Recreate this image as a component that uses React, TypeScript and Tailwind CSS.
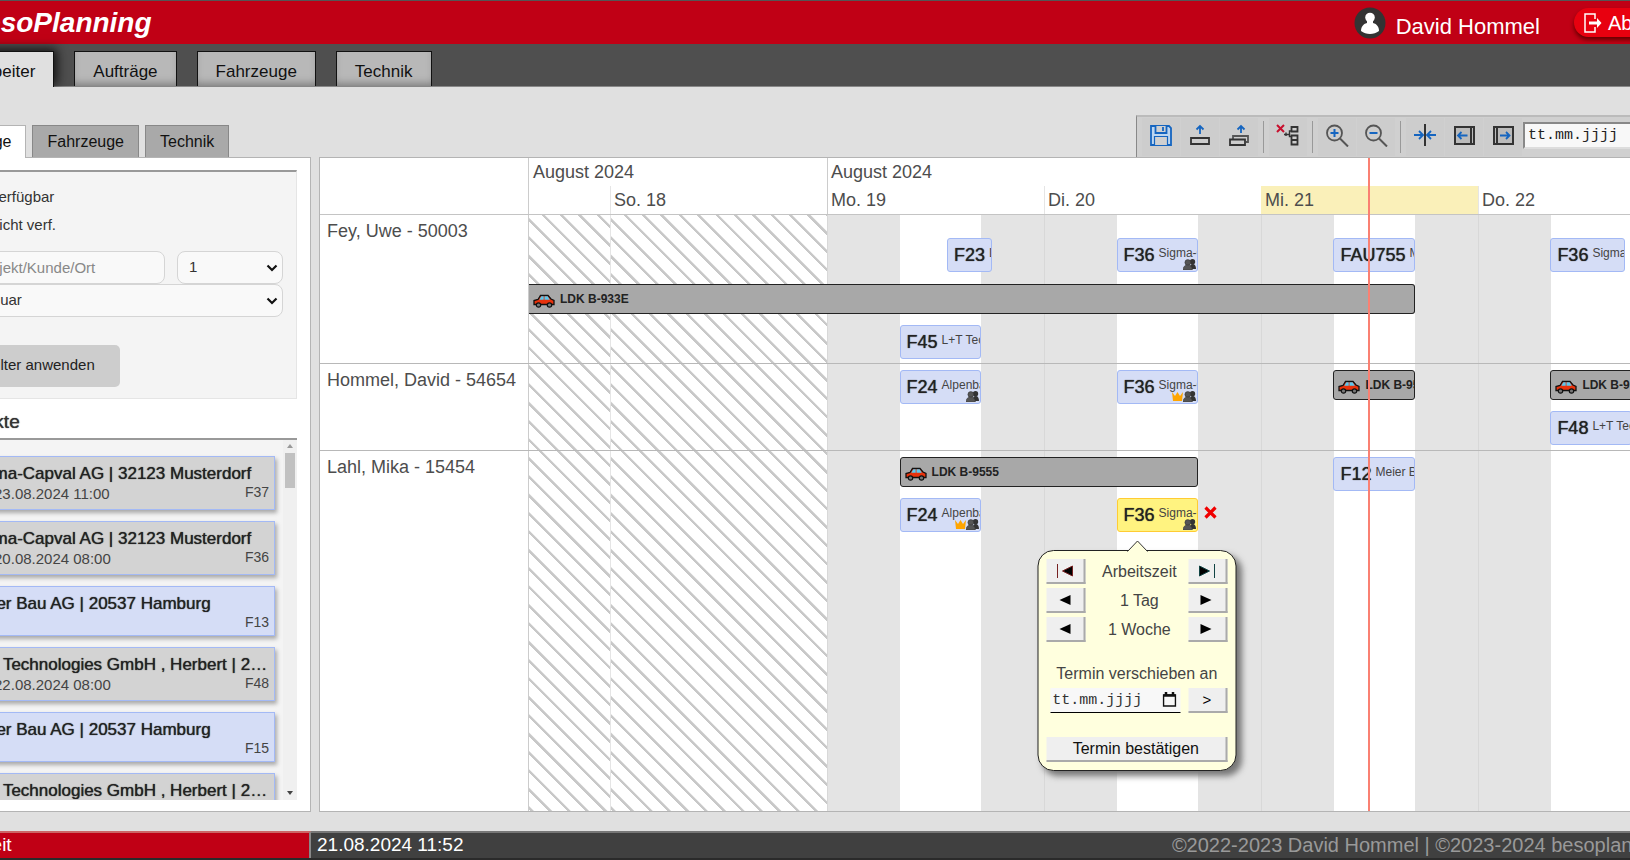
import { useState } from "react";
import type { ReactNode } from "react";

// visible range: Saturday 15:00 until Thursday 24:00
const RANGE_HOURS = 129;
const MO = 33;
const DI = 57;
const MI = 81;
const DO = 105;

const pct = (hours: number) => `${(hours / RANGE_HOURS) * 100}%`;

interface IEntry {
    kind: "order" | "car";
    label: string;
    customer?: string;
    from: number;
    to: number;
    top: string;
    team?: boolean;
    lead?: boolean;
    selected?: boolean;
}

interface IEmployee {
    name: string;
    height: string;
    entries: IEntry[];
}

const employees: IEmployee[] = [
    {
        name: "Fey, Uwe - 50003",
        height: "h-[149px]",
        entries: [
            { kind: "order", label: "F23", customer: "L+T Technologies", from: MO + 13.25, to: MO + 18.25, top: "top-[23px]" },
            { kind: "order", label: "F36", customer: "Sigma-Capval AG", from: DI + 8, to: DI + 17, top: "top-[23px]", team: true },
            { kind: "order", label: "FAU755", customer: "Meier Bau AG", from: MI + 8, to: MI + 17, top: "top-[23px]" },
            { kind: "order", label: "F36", customer: "Sigma-Capval AG", from: DO + 8, to: DO + 16.25, top: "top-[23px]" },
            { kind: "car", label: "LDK B-933E", from: 0, to: MI + 17, top: "top-[69px]" },
            { kind: "order", label: "F45", customer: "L+T Technologies", from: MO + 8, to: MO + 17, top: "top-[110px]" },
        ],
    },
    {
        name: "Hommel, David - 54654",
        height: "h-[87px]",
        entries: [
            { kind: "order", label: "F24", customer: "Alpenbau", from: MO + 8, to: MO + 17, top: "top-[6px]", team: true },
            { kind: "order", label: "F36", customer: "Sigma-Capval AG", from: DI + 8, to: DI + 17, top: "top-[6px]", team: true, lead: true },
            { kind: "car", label: "LDK B-9555", from: MI + 8, to: MI + 17, top: "top-[6px]" },
            { kind: "car", label: "LDK B-9555", from: DO + 8, to: DO + 24, top: "top-[6px]" },
            { kind: "order", label: "F48", customer: "L+T Technologies", from: DO + 8, to: DO + 17, top: "top-[47px]" },
        ],
    },
    {
        name: "Lahl, Mika - 15454",
        height: "flex-1",
        entries: [
            { kind: "car", label: "LDK B-9555", from: MO + 8, to: DI + 17, top: "top-[6px]" },
            { kind: "order", label: "F12", customer: "Meier Bau AG", from: MI + 8, to: MI + 17, top: "top-[6px]" },
            { kind: "order", label: "F24", customer: "Alpenbau", from: MO + 8, to: MO + 17, top: "top-[47px]", team: true, lead: true },
            { kind: "order", label: "F36", customer: "Sigma-Capval AG", from: DI + 8, to: DI + 17, top: "top-[47px]", team: true, selected: true },
        ],
    },
];

const projects = [
    { title: "Sigma-Capval AG | 32123 Musterdorf", date: "23.08.2024 11:00", no: "F37" },
    { title: "Sigma-Capval AG | 32123 Musterdorf", date: "20.08.2024 08:00", no: "F36" },
    { title: "Meier Bau AG | 20537 Hamburg", no: "F13" },
    { title: "L+T Technologies GmbH , Herbert | 20537 Hamburg", date: "22.08.2024 08:00", no: "F48" },
    { title: "Meier Bau AG | 20537 Hamburg", no: "F15" },
    { title: "L+T Technologies GmbH , Herbert | 20537 Hamburg", date: "22.08.2024 08:00", no: "F49" },
];

function CarIcon() {
    return (
        <svg width="22" height="14" viewBox="0 0 22 14" className="mt-1 shrink-0">
            <path d="M1 10.500V6.500L5 5.500L7.500 1.500H15L18 5L21 6.500V10.500Z" fill="#e8320c" stroke="#111" strokeWidth="1.300" />
            <path d="M6.300 5.800L8.300 2.300H10.700V5.800Z" fill="#5cc8ee" />
            <path d="M11.500 5.800V2.300H14.600L16.900 5.800Z" fill="#5cc8ee" />
            <circle cx="5.500" cy="11" r="2.200" fill="#777" stroke="#111" strokeWidth="1.200" />
            <circle cx="16.500" cy="11" r="2.200" fill="#777" stroke="#111" strokeWidth="1.200" />
        </svg>
    );
}

function TeamIcon() {
    return (
        <svg width="13" height="11" viewBox="0 0 13 11">
            <circle cx="9.500" cy="2.700" r="2.700" fill="#333" />
            <path d="M6.500 10C6.500 7 7.500 5 9.700 5S13 7 13 10Z" fill="#333" />
            <circle cx="4.800" cy="3.500" r="2.900" fill="#555" stroke="#333" strokeWidth=".5" />
            <path d="M0 11C0 8 1.500 6 4.700 6S9.400 8 9.400 11Z" fill="#555" stroke="#333" strokeWidth=".5" />
        </svg>
    );
}

function CrownIcon() {
    return (
        <svg width="11" height="10" viewBox="0 0 11 10">
            <path d="M0 0L3 4L5.500 0L8 4L11 0L10 9H1Z" fill="#ffa500" />
        </svg>
    );
}

function Chevron() {
    return (
        <svg width="12" height="8" viewBox="0 0 12 8" className="pointer-events-none absolute top-[13px] right-[5px]">
            <path d="M1.500 1.500L6 6L10.500 1.500" fill="none" stroke="#111" strokeWidth="2.200" />
        </svg>
    );
}

function ToolButton({ label, children }: { label: string; children: ReactNode }) {
    return (
        <button aria-label={label} title={label} className="flex h-[38px] w-[38px] items-center justify-center bg-[#cdcdcd] pb-1 hover:bg-[#bdbdbd]">
            <svg width="24" height="24" viewBox="0 0 24 24" fill="none" stroke="#333" strokeWidth="1.800">
                {children}
            </svg>
        </button>
    );
}

function Separator() {
    return <div className="mx-1 h-8 w-px bg-[#999]" />;
}

function Toolbar() {
    return (
        <div className="ml-auto flex h-[42px] w-[560px] items-center gap-px border-t-2 border-l border-t-[#bbb] border-l-[#888] bg-[#d0d0d0] pl-[5px]">
            <ToolButton label="Speichern">
                <g stroke="#1565c0">
                    <path d="M2 3H20L22 5V22H2Z" fill="#bcd6f0" />
                    <path d="M6.500 3V10H17.500V3M14 4V8" fill="#d0d0d0" />
                    <path d="M5.500 22V13.500H18.500V22" fill="#d0d0d0" strokeWidth="1.200" />
                </g>
            </ToolButton>
            <ToolButton label="Einlagern">
                <path d="M12 11V3M8.500 6.500L12 3L15.500 6.500" stroke="#1565c0" />
                <path d="M3 15H21V21H3Z" />
            </ToolButton>
            <ToolButton label="Alle einlagern">
                <path d="M14 10V3M10.500 6.500L14 3L17.500 6.500" stroke="#1565c0" />
                <path d="M6 16V13H21V19H19" stroke="#555" />
                <path d="M3 16.500H18V22H3Z" />
            </ToolButton>
            <Separator />
            <ToolButton label="Gruppe entfernen">
                <path d="M1 2L8 9M8 2L1 9" stroke="#c8102e" strokeWidth="2" />
                <path d="M15.500 4H21.500V8.500H15.500ZM15.500 12.500H21.500V17H15.500ZM15.500 17H21.500V21.500H15.500Z" />
                <path d="M8 11.500H13.500V8H15.500M13.500 9V13.500H15.500M10 9.500V13" strokeWidth="1.400" />
            </ToolButton>
            <Separator />
            <ToolButton label="Vergrößern">
                <circle cx="9.500" cy="10" r="7.500" stroke="#555" />
                <path d="M15 15.500L23 23.500" stroke="#555" strokeWidth="2" />
                <path d="M9.500 6V14M5.500 10H13.500" stroke="#1565c0" strokeWidth="2" />
            </ToolButton>
            <ToolButton label="Verkleinern">
                <circle cx="9.500" cy="10" r="7.500" stroke="#555" />
                <path d="M15 15.500L23 23.500" stroke="#555" strokeWidth="2" />
                <path d="M5.500 10H13.500" stroke="#1565c0" strokeWidth="2" />
            </ToolButton>
            <Separator />
            <ToolButton label="Heute">
                <path d="M12 1V23" strokeWidth="2" />
                <path d="M1 12H9.500M6 8L10 12L6 16M23 12H14.500M18 8L14 12L18 16" stroke="#1565c0" strokeWidth="1.800" />
            </ToolButton>
            <ToolButton label="Zurück">
                <path d="M3 4H22V21H3ZM19 4V21" strokeWidth="2" fill="#bbb" />
                <path d="M15.500 12.500H6M9.500 9L6 12.500L9.500 16" stroke="#1565c0" />
            </ToolButton>
            <ToolButton label="Vor">
                <path d="M3 4H22V21H3ZM6 4V21" strokeWidth="2" fill="#bbb" />
                <path d="M9 12.500H18.500M15 9L18.500 12.500L15 16" stroke="#1565c0" />
            </ToolButton>
            <input
                aria-label="Datum wählen"
                placeholder="tt.mm.jjjj"
                className="-mt-1 h-[27px] min-w-0 flex-1 border-2 border-[#888] border-r-[#ddd] border-b-[#ddd] bg-[#f8f8f8] px-[3px] font-['Liberation_Mono',monospace] text-[15px] placeholder:text-[#222]"
            />
        </div>
    );
}

function Entry({ entry }: { entry: IEntry }) {
    const place = { left: pct(entry.from), width: pct(entry.to - entry.from) };
    if (entry.kind === "car") {
        return (
            <div
                style={place}
                className={`absolute flex h-[30px] items-center gap-[5px] overflow-hidden rounded-[3px] border border-[#222] bg-[#a8a8a8] pl-1 text-[12px] font-bold whitespace-nowrap text-[#222] ${entry.from === 0 ? "rounded-l-none border-l-0" : ""} ${entry.top}`}
            >
                <CarIcon />
                <span>{entry.label}</span>
            </div>
        );
    }
    return (
        <div
            style={place}
            className={`absolute flex h-[34px] overflow-hidden rounded-[3px] border pl-[6px] whitespace-nowrap ${entry.top} ${entry.selected ? "border-[#fc3] bg-[#fff380]" : "border-[#a3b9f5] bg-[#d5ddf6]"}`}
        >
            <span className="text-[18px] leading-[33px] text-[#222] [text-shadow:0_0_1px_#222]">{entry.label}</span>
            <span className="ml-1 text-[12px] leading-7 text-[#444]">{entry.customer}</span>
            <span className="absolute right-px bottom-px flex items-end">
                {entry.lead && <CrownIcon />}
                {entry.team && <TeamIcon />}
            </span>
        </div>
    );
}

const popupButton = "h-[25px] w-[39px] border-r-2 border-b-2 border-[#aaa] bg-[#efefef] text-[15px] leading-none text-black";

function StepRow({ label, back, forward }: { label: string; back: ReactNode; forward: ReactNode }) {
    return (
        <div className="flex items-center justify-between">
            <button aria-label={`${label} zurück`} className={popupButton}>
                <svg width="20" height="16" viewBox="0 0 20 16" className="mx-auto">{back}</svg>
            </button>
            <span className="pl-[5px]">{label}</span>
            <button aria-label={`${label} vor`} className={popupButton}>
                <svg width="20" height="16" viewBox="0 0 20 16" className="mx-auto">{forward}</svg>
            </button>
        </div>
    );
}

function MovePopup() {
    return (
        <div
            style={{ left: pct(DI + 10.25) }}
            className="absolute top-[99px] z-20 flex w-[199px] -translate-x-1/2 flex-col gap-1 rounded-[16px] border border-[#222] bg-[#ffffde] px-2 pt-2 pb-2 text-[16px] text-[#444] shadow-[5px_5px_6px_#777]"
        >
            <svg width="22" height="12" viewBox="0 0 22 12" className="absolute -top-[11px] left-[88px]">
                <path d="M1 11.500L11 1L21 11.500" fill="#ffffde" stroke="#333" />
                <path d="M1.500 11.500H20.500" stroke="#ffffde" />
            </svg>
            <StepRow
                label="Arbeitszeit"
                back={<path d="M3 1V15M18 3L8 8L18 13Z" fill="#000" stroke="#722" />}
                forward={<path d="M18 1V15M3 3L13 8L3 13Z" fill="#000" stroke="#144" />}
            />
            <StepRow label="1 Tag" back={<path d="M16 3L5 8L16 13Z" />} forward={<path d="M4 3L15 8L4 13Z" />} />
            <StepRow label="1 Woche" back={<path d="M16 3L5 8L16 13Z" />} forward={<path d="M4 3L15 8L4 13Z" />} />
            <label htmlFor="move-date" className="mt-[18px] text-center leading-5">Termin verschieben an</label>
            <div className="flex items-center justify-between">
                <div className="relative ml-1 w-[130px]">
                    <input
                        id="move-date"
                        placeholder="tt.mm.jjjj"
                        className="block h-[25px] w-full border-b border-black bg-[#f8f8f8] px-[2px] font-['Liberation_Mono',monospace] text-[15px] placeholder:text-[#333]"
                    />
                    <svg width="14" height="15" viewBox="0 0 14 15" className="pointer-events-none absolute top-[4px] right-[4px]">
                        <path d="M1 3H13V14H1Z" fill="none" stroke="#111" strokeWidth="1.500" />
                        <path d="M1 3.500H13M3.500 0V3M10.500 0V3" stroke="#111" strokeWidth="2.500" />
                    </svg>
                </div>
                <button className={popupButton}>&gt;</button>
            </div>
            <button className="mt-5 h-[25px] border-r-2 border-b-2 border-[#aaa] bg-[#efefef] leading-none text-[#111]">Termin bestätigen</button>
        </div>
    );
}

function Weekday() {
    return (
        <div className="flex flex-[24] border-l border-[#d8d8d8]">
            <div className="flex-[8] bg-[#e4e4e4]" />
            <div className="flex-[9] bg-white" />
            <div className="flex-[7] bg-[#e4e4e4]" />
        </div>
    );
}

const stripes = "bg-[repeating-linear-gradient(45deg,#fff_0px,#fff_1px,#c8c8c8_1px,#c8c8c8_3px,#fff_4px,#fff_13px)]";

function Timeline() {
    return (
        <section className="relative flex min-h-0 flex-1 flex-col overflow-hidden border border-[#b4b4b4] bg-white text-[18px] text-[#4d4d4d]">
            <div className="flex h-[57px] border-b border-[#c4c4c4] leading-7">
                <div className="w-[209px] shrink-0 border-r border-[#ccc]" />
                <div className="flex-1">
                    <div className="flex">
                        <div className="flex-[33]"><span className="pl-1">August 2024</span></div>
                        <div className="flex-[96] border-l border-[#ccc]"><span className="pl-[3px]">August 2024</span></div>
                    </div>
                    <div className="flex h-7">
                        <div className="flex-[9]" />
                        <div className="flex-[24] border-l border-[#e5e5e5]"><span className="pl-[3px]">So. 18</span></div>
                        <div className="flex-[24] border-l border-[#ccc]"><span className="pl-[3px]">Mo. 19</span></div>
                        <div className="flex-[24] border-l border-[#e5e5e5]"><span className="pl-[3px]">Di. 20</span></div>
                        <div className="flex-[24] border-l border-[#faf0b9] bg-[#faf0b9]"><span className="pl-[3px]">Mi. 21</span></div>
                        <div className="flex-[24] border-l border-[#e5e5e5]"><span className="pl-[3px]">Do. 22</span></div>
                    </div>
                </div>
            </div>
            <div className="relative flex flex-1 flex-col">
                <div className="absolute inset-y-0 right-0 left-[209px] flex">
                    <div className={`flex-[9] ${stripes}`} />
                    <div className={`flex-[24] border-l border-[#e5e5e5] ${stripes}`} />
                    <Weekday />
                    <Weekday />
                    <Weekday />
                    <Weekday />
                </div>
                {employees.map((employee, i) => (
                    <div key={employee.name} className={`relative flex border-[#b8b8b8] ${employee.height} ${i < employees.length - 1 ? "border-b" : ""}`}>
                        <div className="w-[209px] shrink-0 border-r border-[#ccc] pt-1 pl-[7px] leading-6 whitespace-nowrap">{employee.name}</div>
                        <div className="relative flex-1">
                            {employee.entries.map((entry) => (
                                <Entry key={`${entry.label}-${entry.from}`} entry={entry} />
                            ))}
                            {i === 2 && (
                                <>
                                    <button aria-label="Termin entfernen" style={{ left: pct(DI + 17) }} className="absolute top-[55px] ml-[6px]">
                                        <svg width="13" height="13" viewBox="0 0 13 13">
                                            <path d="M1.500 1.500L11.500 11.500M11.500 1.500L1.500 11.500" stroke="#f00000" strokeWidth="3.200" />
                                        </svg>
                                    </button>
                                    <MovePopup />
                                </>
                            )}
                        </div>
                    </div>
                ))}
            </div>
            <div className="pointer-events-none absolute inset-y-0 right-0 left-[209px]">
                <div style={{ left: pct(MI + 11.87) }} className="absolute inset-y-0 w-[2px] bg-[#fa8072]" />
            </div>
        </section>
    );
}

function Filter() {
    return (
        <form className="flex h-[229px] flex-col border-t-2 border-r border-b border-t-[#999] border-r-[#e5e5e5] border-b-[#e5e5e5] bg-[#f4f4f4] px-[13px] pt-[11px] text-[15px] text-[#333]" onSubmit={(e) => e.preventDefault()}>
            <label className="flex h-7 items-center gap-[10px]">
                <input type="checkbox" defaultChecked className="size-[18px]" />
                verfügbar
            </label>
            <label className="flex h-7 items-center gap-[10px]">
                <input type="checkbox" className="size-[18px]" />
                nicht verf.
            </label>
            <div className="mt-3 flex gap-3">
                <input aria-label="Projekt/Kunde/Ort" placeholder="Projekt/Kunde/Ort" className="h-[33px] min-w-0 flex-1 rounded-[8px] border border-[#d5d5d5] bg-[#f9f9f9] px-3 placeholder:text-[#888]" />
                <div className="relative w-[106px]">
                    <select aria-label="Tag" className="h-[33px] w-full appearance-none rounded-[8px] border border-[#d5d5d5] bg-[#f9f9f9] px-[11px]">
                        <option>1</option>
                        <option>2</option>
                    </select>
                    <Chevron />
                </div>
            </div>
            <div className="relative">
                <select aria-label="Monat" className="h-[33px] w-full appearance-none rounded-[8px] border border-[#d5d5d5] bg-[#f9f9f9] px-3">
                    <option>Januar</option>
                    <option>Februar</option>
                </select>
                <Chevron />
            </div>
            <button className="mt-7 h-[42px] self-start rounded-[5px] bg-[#cdcdcd] px-[25px] pb-[2px] text-[#222]">Filter anwenden</button>
        </form>
    );
}

function ProjectList() {
    return (
        <div className="flex min-h-0 flex-1 border-t-2 border-[#999] bg-[#f4f4f4]">
            <ul className="flex min-w-0 flex-1 flex-col gap-[11px] overflow-hidden pt-4 pr-2 pl-2">
                {projects.map((project) => (
                    <li
                        key={project.no}
                        className={`relative shrink-0 border border-[#a3b9f5] pt-[7px] pr-[6px] pl-[10px] shadow-[2px_3px_4px_#aaa] ${project.date ? "h-[54px] bg-[#d3d3d3]" : "h-[50px] bg-[#d5ddf6]"}`}
                    >
                        <div className="truncate text-[17px] leading-5 text-[#222] [text-shadow:0_0_1px_#222]">{project.title}</div>
                        {project.date && <div className="text-[15px] leading-5 text-[#444]">ab: {project.date}</div>}
                        <span className="absolute top-[26px] right-[5px] text-[14px] leading-[18px] text-[#444]">{project.no}</span>
                    </li>
                ))}
            </ul>
            <div className="flex w-[14px] flex-col items-center bg-[#f0f0f0] pt-1 pr-px pb-[5px]">
                <svg width="6" height="4" viewBox="0 0 6 4"><path d="M0 4L3 0L6 4Z" fill="#999" /></svg>
                <div className="mt-[5px] h-[35px] w-[10px] bg-[#c1c1c1]" />
                <svg width="6" height="4" viewBox="0 0 6 4" className="mt-auto"><path d="M0 0L3 4L6 0Z" fill="#444" /></svg>
            </div>
        </div>
    );
}

function Sidebar() {
    const [tab, setTab] = useState("Aufträge");
    return (
        <aside className="flex w-[375px] shrink-0 flex-col pt-[38px]">
            <div className="flex gap-[6px] text-[16px] text-[#111]">
                {["Aufträge", "Fahrzeuge", "Technik"].map((name) => (
                    <button
                        key={name}
                        onClick={() => setTab(name)}
                        className={`h-8 border border-b-0 px-[14px] leading-8 ${tab === name ? "relative z-10 -mb-px h-[33px] border-[#b4b4b4] bg-white" : "border-[#888] bg-[#a9a9a9]"}`}
                    >
                        {name}
                    </button>
                ))}
            </div>
            <div className="flex min-h-0 flex-1 flex-col border border-[#b4b4b4] bg-white px-[13px] pt-3 pb-[11px]">
                <Filter />
                <h2 className="pt-[10px] pb-1 text-[19px] leading-[25px] text-[#333] [text-shadow:0_0_1px_#333]">Projekte</h2>
                <ProjectList />
            </div>
        </aside>
    );
}

function Header() {
    return (
        <header className="flex h-11 shrink-0 items-center border-t border-[#555] bg-[#c00015] pr-4 pl-12 text-white">
            <h1 className="text-[28px] leading-none font-bold italic">besoPlanning</h1>
            <svg width="32" height="32" viewBox="0 0 32 32" className="ml-auto">
                <circle cx="16" cy="16" r="15.500" fill="#333" />
                <circle cx="16" cy="10.500" r="4.800" fill="#fff" />
                <path d="M13 13H19L19 16C23 17 25 20 25 24C20 28 12 28 7 24C7 20 9 17 13 16Z" fill="#fff" />
            </svg>
            <span className="mt-2 ml-[10px] text-[22px] leading-none">David Hommel</span>
            <button className="ml-[34px] flex h-[29px] items-center gap-[6px] rounded-full bg-[#e8000f] pr-3 pl-[10px] text-[20px] leading-none shadow-[0_3px_4px_#600]">
                <svg width="18" height="20" viewBox="0 0 18 20" fill="none" stroke="#fff" strokeWidth="1.500">
                    <path d="M11 6V1H1V19H11V14" />
                    <path d="M5 10H14" strokeWidth="3" />
                    <path d="M13 5L17.500 10L13 15Z" fill="#fff" stroke="none" />
                </svg>
                Abmelden
            </button>
        </header>
    );
}

export default function App() {
    const [page, setPage] = useState("Mitarbeiter");
    return (
        <div className="h-screen overflow-hidden bg-[#e0e0e0] font-['Liberation_Sans',Arial,sans-serif]">
            <div className="-mr-24 -ml-20 flex h-full flex-col">
                <Header />
                <nav className="flex h-[43px] shrink-0 items-end gap-5 border-b border-[#888] bg-[#4f4f4f] pl-4 text-[17px] text-[#111]">
                    {["Mitarbeiter", "Aufträge", "Fahrzeuge", "Technik"].map((name) => (
                        <button
                            key={name}
                            onClick={() => setPage(name)}
                            className={`border border-b-0 border-[#111] px-[18px] pt-[5px] ${page === name ? "-mb-px h-9 bg-[#e0e0e0] shadow-[3px_-2px_10px_#111]" : "h-[35px] bg-[#b8b8b8] shadow-[inset_0_-6px_8px_-4px_#777]"}`}
                        >
                            {name}
                        </button>
                    ))}
                </nav>
                <main className="flex min-h-0 flex-1 gap-2 bg-[#e0e0e0] pr-[30px] pb-[19px] pl-4">
                    <Sidebar />
                    <div className="flex min-w-0 flex-1 flex-col pt-7">
                        <Toolbar />
                        <Timeline />
                    </div>
                </main>
                <footer className="flex h-[29px] shrink-0 border-b-2 border-[#2a2a2a] bg-[#404040] leading-6">
                    <div className="w-[391px] border-t-2 border-r-2 border-[#888] border-t-[#c66] bg-[#c00015] pl-[42px] text-[19px] text-white">Arbeit</div>
                    <div className="flex flex-1 justify-between border-t-2 border-[#777] pr-7 pl-[6px]">
                        <span className="text-[19px] text-white">21.08.2024 11:52</span>
                        <span className="text-[20px] text-[#999]">©2022-2023 David Hommel | ©2023-2024 besoplanning.de</span>
                    </div>
                </footer>
            </div>
        </div>
    );
}
